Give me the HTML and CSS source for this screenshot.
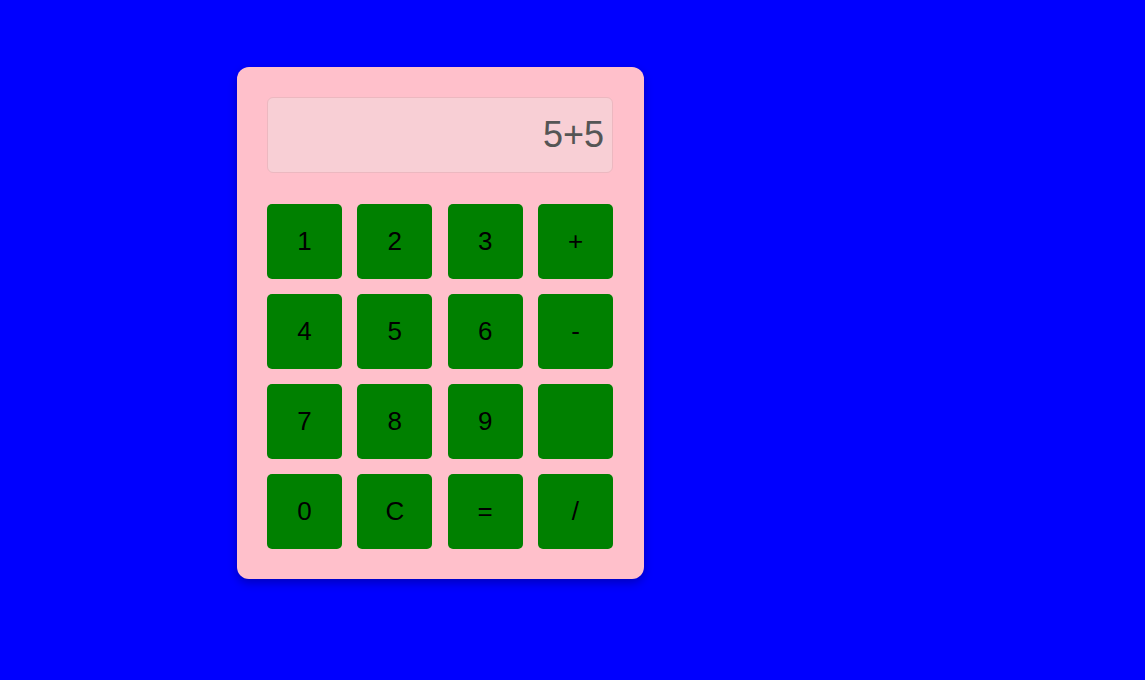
FILE: index.html
```html
<!DOCTYPE html>
<html>
<head>
<meta charset="utf-8">
<link rel="stylesheet" href="styles.css">
</head>
<body>
<div class="page">
  <div class="calc">
    <div class="display">5+5</div>
    <div class="keys">
      <button class="key">1</button>
      <button class="key">2</button>
      <button class="key">3</button>
      <button class="key">+</button>
      <button class="key">4</button>
      <button class="key">5</button>
      <button class="key">6</button>
      <button class="key">-</button>
      <button class="key">7</button>
      <button class="key">8</button>
      <button class="key">9</button>
      <button class="key"></button>
      <button class="key">0</button>
      <button class="key">C</button>
      <button class="key">=</button>
      <button class="key">/</button>
    </div>
  </div>
</div>
</body>
</html>
```
FILE: styles.css
```css
html, body {
  margin: 0;
  padding: 0;
  background: #0000ff;
  font-family: "Liberation Sans", Arial, sans-serif;
}
.page {
  padding: 67px 0 0 237px;
  height: 680px;
  box-sizing: border-box;
}
.calc {
  width: 407px;
  box-sizing: border-box;
  padding: 30px 30px 30px 30px;
  background: #ffc0cb;
  border-radius: 12px;
  box-shadow: 0 4px 10px rgba(0, 0, 0, 0.25);
}
.display {
  width: 346px;
  height: 76px;
  box-sizing: border-box;
  border: 1px solid #ecb8c0;
  border-radius: 6px;
  background: #f8cfd5;
  color: #555555;
  font-size: 36px;
  line-height: 74px;
  text-align: right;
  padding-right: 8px;
  margin-bottom: 31px;
}
.keys {
  display: grid;
  grid-template-columns: repeat(4, 75px);
  grid-auto-rows: 75px;
  column-gap: 15.33px;
  row-gap: 15px;
}
.key {
  background: #008000;
  border: none;
  border-radius: 5px;
  color: #000;
  font-family: "Liberation Sans", Arial, sans-serif;
  font-size: 26px;
  padding: 0;
  margin: 0;
}
```
